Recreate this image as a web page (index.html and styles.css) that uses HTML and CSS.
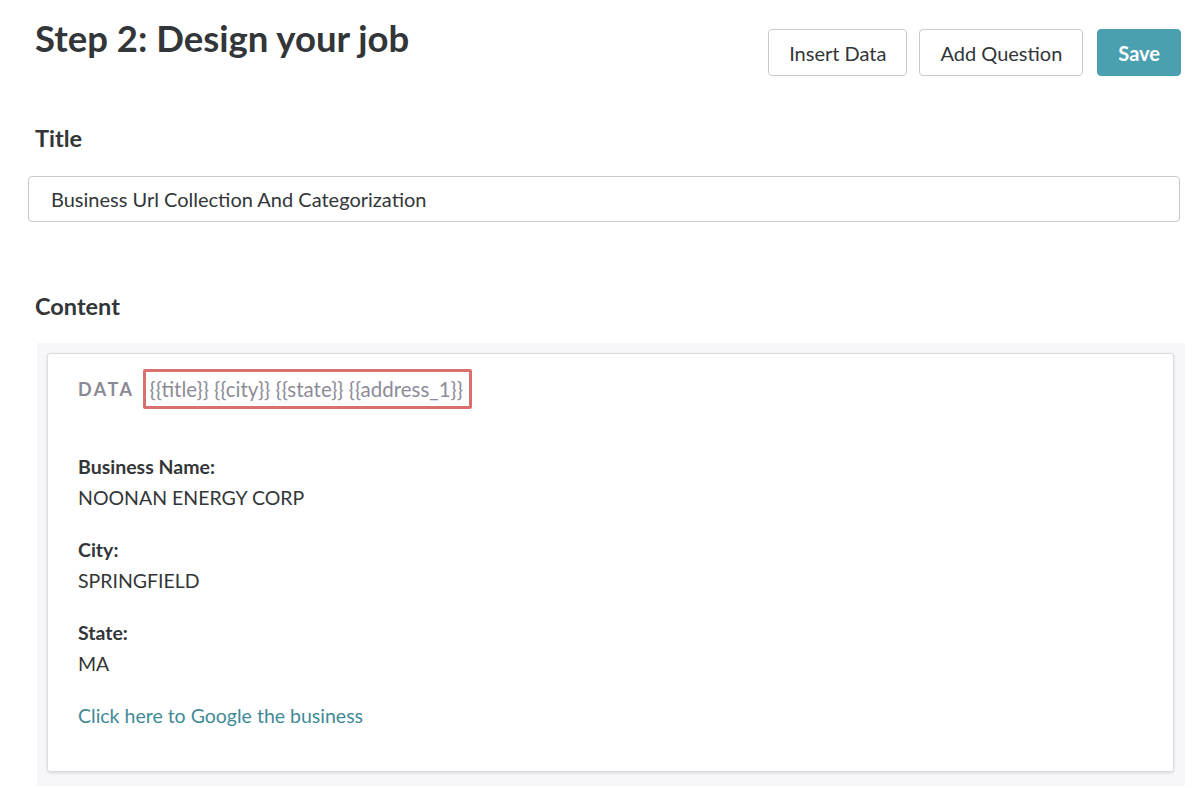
FILE: index.html
```html
<!DOCTYPE html>
<html>
<head>
  <title>Step 2: Design your job</title>
  <link rel="stylesheet" href="styles.css">
</head>
<body>
  <div class="page">
    <div class="page-header">
      <h1>Step 2: Design your job</h1>
      <div class="actions">
        <button type="button" class="btn">Insert Data</button>
        <button type="button" class="btn">Add Question</button>
        <button type="button" class="btn btn-primary">Save</button>
      </div>
    </div>

    <div class="field">
      <label for="title">Title</label>
      <input type="text" id="title" value="Business Url Collection And Categorization">
    </div>

    <div class="field content-field">
      <label>Content</label>
      <div class="content-panel">
        <div class="content-card">
          <div class="data-row">
            <span class="data-label">DATA</span>
            <span class="data-tokens">{{title}} {{city}} {{state}} {{address_1}}</span>
          </div>

          <div class="item">
            <strong>Business Name:</strong>
            <div>NOONAN ENERGY CORP</div>
          </div>
          <div class="item">
            <strong>City:</strong>
            <div>SPRINGFIELD</div>
          </div>
          <div class="item">
            <strong>State:</strong>
            <div>MA</div>
          </div>
          <a href="#" class="google-link">Click here to Google the business</a>
        </div>
      </div>
    </div>
  </div>
</body>
</html>
```

FILE: styles.css
```css
/* page styles */

body {
  font-family: Lato, "Open Sans", sans-serif;
  background-color: #fff;
  color: #333638;
  margin: 0;
  padding: 0;
}

.page {
  padding: 0 15px 0 28px;
}

.page-header {
  display: flex;
  justify-content: space-between;
  align-items: flex-start;
  height: 76px;
}

h1 {
  font-size: 36.5px;
  font-weight: 700;
  margin: 14px 0 0 7px;
  line-height: 48px;
  color: #333638;
}

.actions {
  display: flex;
  gap: 12px;
  margin-top: 29px;
}

.btn {
  font-family: Lato, sans-serif;
  font-size: 20px;
  height: 47px;
  padding: 0 20px;
  border: 1px solid #c9c9cf;
  border-radius: 4px;
  background-color: #fff;
  color: #333638;
  cursor: pointer;
}

.btn-primary {
  background-color: #4aa0af;
  border-color: #4aa0af;
  color: #fff;
  font-weight: 700;
  padding: 0 20px;
  margin-left: 2px;
}

.field label {
  display: block;
  font-size: 23.5px;
  line-height: 30px;
  font-weight: 700;
  margin-left: 7px;
  color: #333638;
}

.field {
  margin-top: 47px;
}

.field + .field {
  margin-top: 69px;
}

input[type="text"] {
  display: block;
  width: 1152px;
  height: 46px;
  margin-top: 23px;
  padding: 0 22px;
  border: 1px solid #c9c9cf;
  border-radius: 4px;
  font-family: Lato, sans-serif;
  font-size: 20px;
  color: #333638;
  box-sizing: border-box;
}

.content-panel {
  margin: 22px 0 0 9px;
  width: 1148px;
  padding: 10px 11px 14px 10px;
  background-color: #f7f7fa;
  box-sizing: border-box;
}

.content-card {
  background-color: #fff;
  border: 1px solid #dcdce2;
  border-radius: 3px;
  box-shadow: 0 1px 3px rgba(0, 0, 0, 0.12);
  padding: 15px 30px 40px;
  font-size: 19.5px;
  line-height: 31px;
  color: #333638;
}

.data-row {
  display: flex;
  align-items: center;
  margin-bottom: 42px;
}

.data-label {
  font-size: 18px;
  font-weight: 700;
  letter-spacing: 2.5px;
  color: #8a8a94;
  margin-right: 8px;
}

.data-tokens {
  border: 3px solid #d9706b;
  border-radius: 2px;
  padding: 0 6px 0 4px;
  height: 34px;
  line-height: 34px;
  font-size: 20.5px;
  color: #8c8c98;
}

.item {
  margin-bottom: 21px;
}

.item strong {
  display: block;
  font-weight: 700;
}

.google-link {
  color: #3f8a97;
  text-decoration: none;
}
```
